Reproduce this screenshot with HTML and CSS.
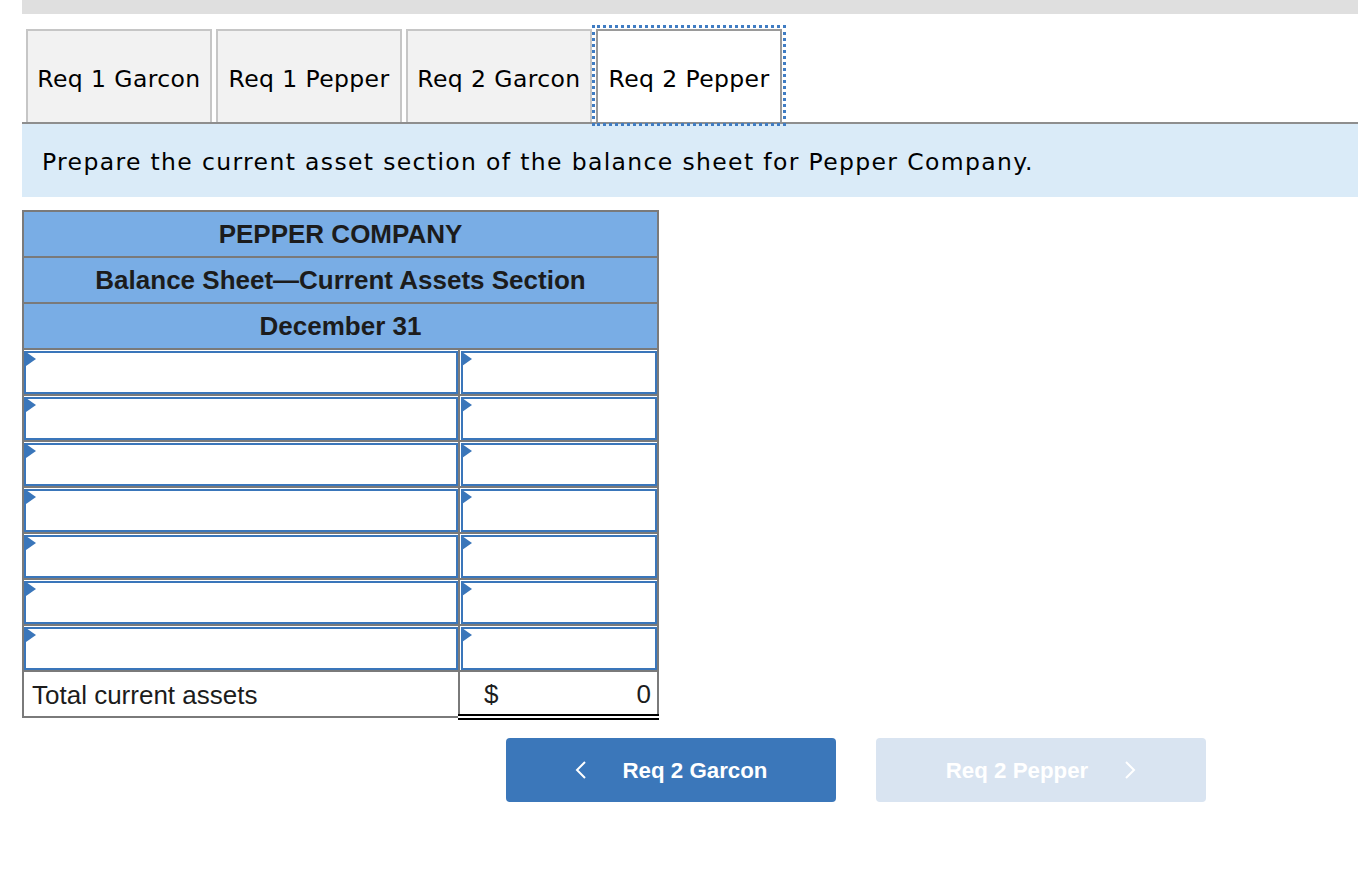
FILE: index.html
```html
<!DOCTYPE html>
<html lang="en">
<head>
  <meta charset="UTF-8">
  <title>Req 2 Pepper</title>
  <link rel="stylesheet" href="styles.css">
</head>
<body>
<div class="page">
  <div class="topbar"></div>

  <div class="tabs">
    <div class="tab">Req 1 Garcon</div>
    <div class="tab">Req 1 Pepper</div>
    <div class="tab">Req 2 Garcon</div>
    <div class="tab active">Req 2 Pepper</div>
  </div>

  <div class="instructions">Prepare the current asset section of the balance sheet for Pepper Company.</div>

  <table class="sheet">
    <colgroup><col class="col-label"><col class="col-amount"></colgroup>
    <tr><th colspan="2">PEPPER COMPANY</th></tr>
    <tr><th colspan="2">Balance Sheet&mdash;Current Assets Section</th></tr>
    <tr><th colspan="2">December 31</th></tr>
    <tr><td class="entry"><input type="text"></td><td class="entry"><input type="text"></td></tr>
    <tr><td class="entry"><input type="text"></td><td class="entry"><input type="text"></td></tr>
    <tr><td class="entry"><input type="text"></td><td class="entry"><input type="text"></td></tr>
    <tr><td class="entry"><input type="text"></td><td class="entry"><input type="text"></td></tr>
    <tr><td class="entry"><input type="text"></td><td class="entry"><input type="text"></td></tr>
    <tr><td class="entry"><input type="text"></td><td class="entry"><input type="text"></td></tr>
    <tr><td class="entry"><input type="text"></td><td class="entry"><input type="text"></td></tr>
    <tr class="total-row">
      <td class="label">Total current assets</td>
      <td class="total"><span class="cur">$</span><span class="amt">0</span></td>
    </tr>
  </table>

  <div class="nav">
    <button class="nav-btn prev">
      <svg width="12" height="18" viewBox="0 0 12 18"><path d="M10 1 L2 9 L10 17" fill="none" stroke="#fff" stroke-width="2"/></svg>
      <span>Req 2 Garcon</span>
    </button>
    <button class="nav-btn next" disabled>
      <span>Req 2 Pepper</span>
      <svg width="12" height="18" viewBox="0 0 12 18"><path d="M2 1 L10 9 L2 17" fill="none" stroke="#fff" stroke-width="2"/></svg>
    </button>
  </div>
</div>
</body>
</html>
```

FILE: styles.css
```css
body {margin: 0; background: #fff; font-family: "DejaVu Sans", Verdana, sans-serif; color: #000;}
.page {padding-left: 22px;}
.topbar {height: 14px; background: #dfdfdf;}

.tabs {display: flex; gap: 4px; padding-left: 4px; margin-top: 15px; border-bottom: 2px solid #8e8e8e;}
.tab {width: 186px; height: 93px; box-sizing: border-box; border: 2px solid #c6c6c6; border-bottom: none; background: #f2f2f2; display: flex; align-items: center; justify-content: center; font-size: 23.5px; letter-spacing: 0.4px; padding-top: 4px;}
.tab.active {background: #fff; border-color: #9a9a9a; outline: 3px dotted #3f7cc3; outline-offset: 1px;}

.instructions {height: 73px; background: #daebf8; display: flex; align-items: center; padding-left: 20px; font-size: 23.5px; letter-spacing: 1.35px; padding-top: 3px; box-sizing: border-box;}

.sheet {margin-top: 13px; width: 635px; table-layout: fixed; border-collapse: collapse; font-family: "Liberation Sans", Arial, sans-serif; font-size: 26px; color: #1c1c1c;}
.col-label {width: 436px;}
.col-amount {width: 199px;}
.sheet th {background: #79ade5; border: 2px solid #7a7a7a; height: 44px; padding: 0; font-weight: bold; text-align: center;}
.sheet td {border: 2px solid #7a7a7a; padding: 0; height: 44px;}
.entry {position: relative;}
.entry::before {content: ""; position: absolute; left: 2px; top: 2px; border-top: 7px solid transparent; border-bottom: 7px solid transparent; border-left: 10px solid #3a76ba;}
.entry input {display: block; width: 100%; height: 43px; box-sizing: border-box; border: 2px solid #3a76ba; margin: 0; padding: 0 6px; font: inherit; background: #fff;}
.entry + .entry input {margin-left: 1px; width: calc(100% - 1px);}
.total-row td {height: 40px;}
.sheet .label {padding-left: 8px; padding-top: 2px;}
.sheet .total {border-top: 2px solid #000; border-bottom: 6px double #000; padding: 2px 6px 0 24px;}
.cur {float: left;}
.amt {float: right;}

.nav {display: flex; gap: 40px; margin-top: 18px; padding-left: 484px;}
.nav-btn {width: 330px; height: 64px; border: none; border-radius: 4px; display: flex; align-items: center; justify-content: center; gap: 36px; font-family: "Liberation Sans", Arial, sans-serif; font-weight: bold; font-size: 22.3px; color: #fff;}
.nav-btn span {padding-top: 2px;}
.prev {background: #3b77ba;}
.next {background: #d9e4f1; color: #fff;}
```
